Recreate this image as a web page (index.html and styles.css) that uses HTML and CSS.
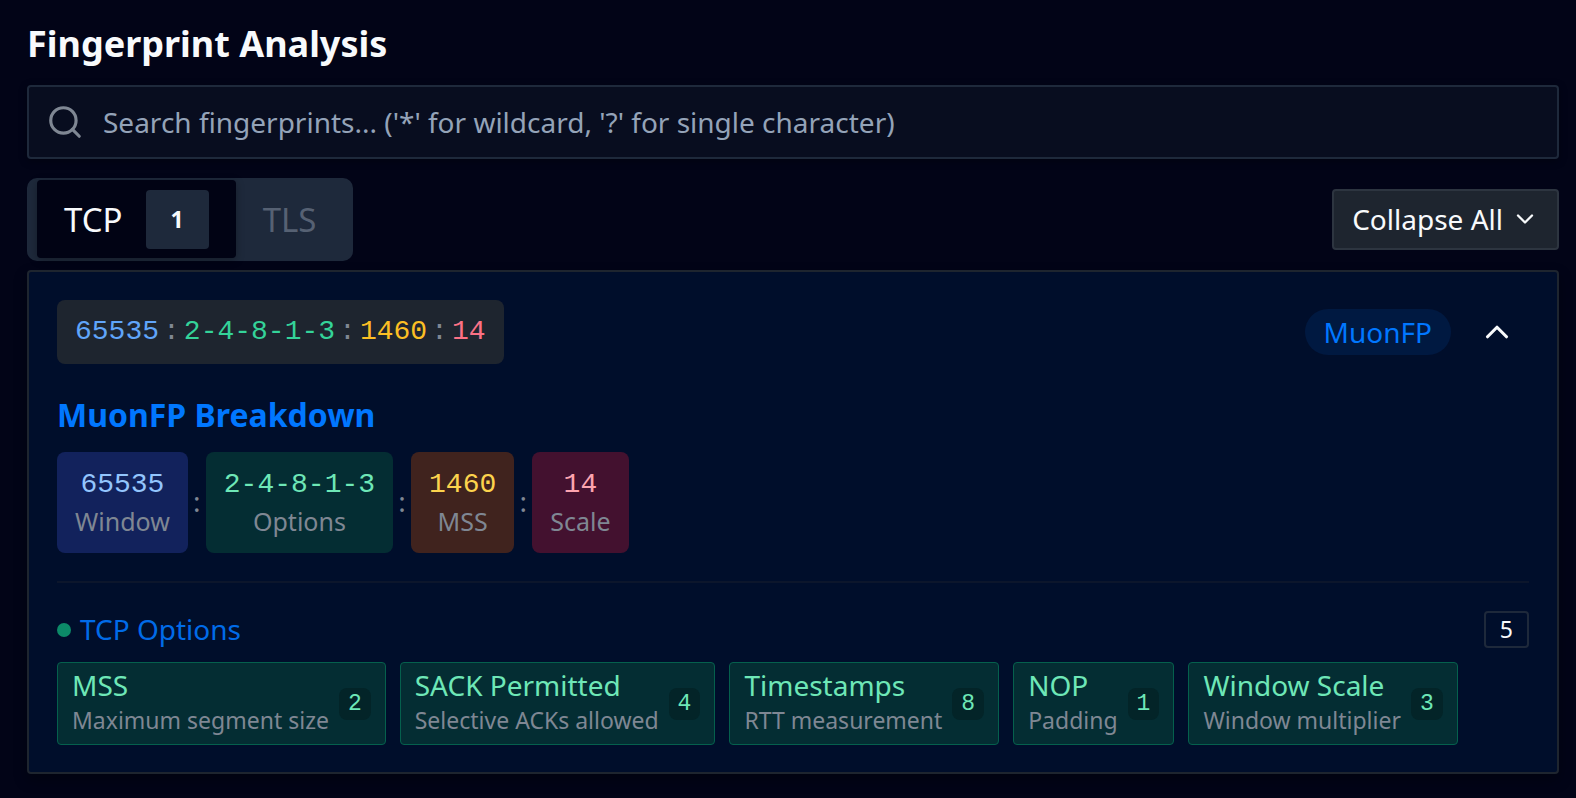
FILE: index.html
```html
<!DOCTYPE html>
<html lang="en">
<head>
    <meta charset="UTF-8">
    <meta name="viewport" content="width=device-width, initial-scale=1.0">
    <title>Fingerprint Analysis</title>
    <link rel="stylesheet" href="styles.css">
</head>
<body>
    <main class="page">
        <h1 class="title">Fingerprint Analysis</h1>

        <label class="search">
            <svg class="search-icon" viewBox="0 0 24 24" aria-hidden="true">
                <circle cx="11" cy="11" r="8"/>
                <path d="m21 21-4.3-4.3"/>
            </svg>
            <input class="search-input" type="text" aria-label="Search fingerprints" placeholder="Search fingerprints... ('*' for wildcard, '?' for single character)">
        </label>

        <div class="toolbar">
            <div class="tabs" role="tablist">
                <button class="tab active" role="tab" aria-selected="true">TCP <span class="tab-count">1</span></button>
                <button class="tab" role="tab" aria-selected="false" disabled>TLS</button>
            </div>
            <button class="collapse">
                Collapse All
                <svg class="collapse-icon" viewBox="0 0 24 24" aria-hidden="true"><path d="m6 9 6 6 6-6"/></svg>
            </button>
        </div>

        <section class="card">
            <div class="card-head">
                <div class="fingerprint">
                    <span class="fp-window">65535</span>
                    <span class="fp-sep">:</span>
                    <span class="fp-options">2-4-8-1-3</span>
                    <span class="fp-sep">:</span>
                    <span class="fp-mss">1460</span>
                    <span class="fp-sep">:</span>
                    <span class="fp-scale">14</span>
                </div>
                <span class="pill">MuonFP</span>
                <button class="toggle" aria-label="Collapse">
                    <svg class="toggle-icon" viewBox="0 0 24 24" aria-hidden="true"><path d="m18 15-6-6-6 6"/></svg>
                </button>
            </div>

            <h2 class="subtitle">MuonFP Breakdown</h2>
            <div class="parts">
                <div class="part part-window"><span class="part-value">65535</span><span class="part-label">Window</span></div>
                <span class="part-sep">:</span>
                <div class="part part-options"><span class="part-value">2-4-8-1-3</span><span class="part-label">Options</span></div>
                <span class="part-sep">:</span>
                <div class="part part-mss"><span class="part-value">1460</span><span class="part-label">MSS</span></div>
                <span class="part-sep">:</span>
                <div class="part part-scale"><span class="part-value">14</span><span class="part-label">Scale</span></div>
            </div>

            <div class="options-head">
                <span class="dot"></span>
                <h3 class="options-title">TCP Options</h3>
                <span class="options-count">5</span>
            </div>
            <div class="options">
                <div class="option">
                    <div class="option-text"><span class="option-name">MSS</span><span class="option-info">Maximum segment size</span></div>
                    <span class="option-code">2</span>
                </div>
                <div class="option">
                    <div class="option-text"><span class="option-name">SACK Permitted</span><span class="option-info">Selective ACKs allowed</span></div>
                    <span class="option-code">4</span>
                </div>
                <div class="option">
                    <div class="option-text"><span class="option-name">Timestamps</span><span class="option-info">RTT measurement</span></div>
                    <span class="option-code">8</span>
                </div>
                <div class="option">
                    <div class="option-text"><span class="option-name">NOP</span><span class="option-info">Padding</span></div>
                    <span class="option-code">1</span>
                </div>
                <div class="option">
                    <div class="option-text"><span class="option-name">Window Scale</span><span class="option-info">Window multiplier</span></div>
                    <span class="option-code">3</span>
                </div>
            </div>
        </section>
    </main>
</body>
</html>
```
FILE: styles.css
```css
* {
    box-sizing: border-box;
}
body {
    margin: 0;
    background-color: #020417;
    color: #f8fafc;
    font-family: "Noto Sans", sans-serif;
    font-size: 28px;
}
h1, h2, h3 {
    margin: 0;
}
button {
    font-family: inherit;
    color: inherit;
    cursor: pointer;
}
svg {
    fill: none;
    stroke: currentColor;
    stroke-width: 2;
    stroke-linecap: round;
    stroke-linejoin: round;
    flex-shrink: 0;
}
.page {
    padding: 20px 17px 20px 27px;
}
.title {
    font-size: 36px;
    line-height: 48px;
    margin-bottom: 17px;
}

/* search */
.search {
    display: flex;
    align-items: center;
    gap: 19px;
    height: 74px;
    padding: 0 17px;
    border: 2px solid #1e293b;
    border-radius: 4px;
    background-color: #080d1f;
    box-shadow: 0 2px 8px rgba(0, 0, 0, 0.3);
}
.search-icon {
    width: 38px;
    height: 38px;
    color: #7f8793;
}
.search-input {
    flex: 1;
    min-width: 0;
    padding: 0;
    border: none;
    outline: none;
    background: none;
    color: #f8fafc;
    font-family: inherit;
    font-size: 28px;
}
.search-input::placeholder {
    color: #94a3b8;
    opacity: 1;
}

/* tabs */
.toolbar {
    display: flex;
    align-items: center;
    justify-content: space-between;
    margin: 19px 0 9px;
}
.tabs {
    display: flex;
    height: 83px;
    padding: 2px 10px 3px;
    border-radius: 10px;
    background-color: #1e293b;
}
.tab {
    display: flex;
    align-items: center;
    gap: 23px;
    padding: 0 27px;
    border: none;
    border-radius: 4px;
    background: none;
    font-size: 33px;
}
.tab.active {
    background-color: #010314;
    box-shadow: 0 2px 8px rgba(0, 0, 0, 0.3);
}
.tab:disabled {
    color: #566173;
    cursor: default;
}
.tab-count {
    padding: 0 25px;
    border-radius: 4px;
    background-color: #1e293b;
    font-size: 23px;
    font-weight: bold;
    line-height: 59px;
}
.collapse {
    display: flex;
    align-items: center;
    gap: 8px;
    height: 61px;
    padding: 0 18px 2px;
    border: 2px solid #2d3540;
    border-radius: 4px;
    background-color: #1e252f;
    font-size: 28px;
    line-height: 36px;
}
.collapse-icon {
    width: 28px;
    height: 28px;
}

/* card */
.card {
    padding: 28px 28px 27px;
    border: 2px solid #1e252f;
    border-radius: 4px;
    background-color: #000e2b;
    box-shadow: 0 6px 14px rgba(0, 0, 0, 0.3);
}
.card-head {
    display: flex;
    align-items: center;
    margin-bottom: 30px;
}
.fingerprint {
    display: flex;
    gap: 4px;
    padding: 0 18px;
    border-radius: 8px;
    background-color: #1e252f;
    font-family: "Liberation Mono", monospace;
    line-height: 64px;
}
.fp-window {
    color: #60a5fa;
}
.fp-options {
    color: #34d399;
}
.fp-mss {
    color: #fbbf24;
}
.fp-scale {
    color: #fb7185;
}
.fp-sep, .part-sep {
    color: #7f8793;
}
.pill {
    margin-left: auto;
    padding: 0 19px;
    border-radius: 23px;
    background-color: #001941;
    color: #0077ff;
    line-height: 46px;
}
.toggle {
    display: flex;
    margin-left: 14px;
    padding: 10px 13px;
    border: none;
    background: none;
}
.toggle-icon {
    width: 38px;
    height: 38px;
}
.subtitle {
    color: #0077ff;
    font-size: 32px;
    line-height: 42px;
    margin-bottom: 16px;
}
.parts {
    display: flex;
    align-items: center;
    padding-bottom: 28px;
    border-bottom: 2px solid #0c162c;
}
.part {
    display: flex;
    flex-direction: column;
    align-items: center;
    padding: 14px 18px;
    border-radius: 8px;
}
.part-value {
    font-family: "Liberation Mono", monospace;
    line-height: 38px;
}
.part-label {
    color: #7f8793;
    font-size: 25px;
    line-height: 35px;
}
.part-sep {
    width: 18px;
    padding-bottom: 4px;
    text-align: center;
}
.part-window {
    background-color: #12225c;
    color: #93c5fd;
}
.part-options {
    background-color: #042d33;
    color: #6ee7b7;
}
.part-mss {
    background-color: #40231e;
    color: #fcd34d;
}
.part-scale {
    background-color: #43112f;
    color: #fda4af;
}

/* tcp options */
.options-head {
    display: flex;
    align-items: center;
    gap: 9px;
    margin: 28px 0 14px;
}
.dot {
    width: 14px;
    height: 14px;
    border-radius: 50%;
    background-color: #0c8a68;
}
.options-title {
    color: #006be8;
    font-size: 28px;
    font-weight: normal;
    line-height: 37px;
}
.options-count {
    margin-left: auto;
    padding: 0 14px;
    border: 2px solid #1e293b;
    border-radius: 4px;
    font-size: 23px;
    line-height: 33px;
}
.options {
    display: flex;
    flex-wrap: wrap;
    gap: 14px;
}
.option {
    display: flex;
    align-items: center;
    gap: 10px;
    padding: 8px 14px;
    border: 1px solid #05604d;
    border-radius: 4px;
    background-color: #042d33;
    color: #6ee7b7;
}
.option-text {
    display: flex;
    flex-direction: column;
    gap: 6px;
}
.option-name {
    line-height: 28px;
}
.option-info {
    color: #7f8793;
    font-size: 23px;
    line-height: 31px;
}
.option-code {
    padding: 0 9px;
    border-radius: 8px;
    background-color: #032428;
    font-family: "Liberation Mono", monospace;
    font-size: 23px;
    line-height: 32px;
}
```
